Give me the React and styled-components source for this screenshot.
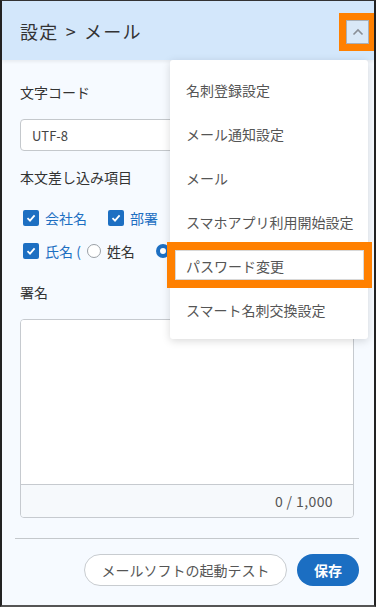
import styled, { createGlobalStyle } from "styled-components";

const GlobalStyle = createGlobalStyle`
  body {
    margin: 0;
    background: #ffffff;
    font-family: "Noto Sans CJK JP", "Noto Sans", sans-serif;
  }
`;

const menuItems = [
  "名刺登録設定",
  "メール通知設定",
  "メール",
  "スマホアプリ利用開始設定",
  "パスワード変更",
  "スマート名刺交換設定",
];

const CheckIcon = () => (
  <svg width="12" height="12" viewBox="0 0 12 12">
    <path d="M2.5 6.2 L5 8.6 L9.6 3.4" fill="none" stroke="#fff" strokeWidth="1.8" />
  </svg>
);

const App = () => {
  return (
    <>
      <GlobalStyle />
      <Frame>
        <Header>
          <Title>設定 &gt; メール</Title>
          <ToggleMark>
            <ToggleBtn>
              <svg width="12" height="8" viewBox="0 0 12 8">
                <path d="M1.5 6.5 L6 2 L10.5 6.5" fill="none" stroke="#8a8f96" strokeWidth="1.6" />
              </svg>
            </ToggleBtn>
          </ToggleMark>
        </Header>

        <Body>
          <Label>文字コード</Label>
          <Select>UTF-8</Select>
          <Label $top={16}>本文差し込み項目</Label>

          <CheckRow $top={21} $gap={21}>
            <CheckItem>
              <CheckBox>
                <CheckIcon />
              </CheckBox>
              <BlueText>会社名</BlueText>
            </CheckItem>
            <CheckItem>
              <CheckBox>
                <CheckIcon />
              </CheckBox>
              <BlueText>部署</BlueText>
            </CheckItem>
          </CheckRow>

          <CheckRow $top={13} $gap={6}>
            <CheckItem>
              <CheckBox>
                <CheckIcon />
              </CheckBox>
              <BlueText>氏名 (</BlueText>
            </CheckItem>
            <RadioItem>
              <Radio />
              <span>姓名</span>
            </RadioItem>
            <RadioItem $left={15}>
              <Radio $on />
            </RadioItem>
          </CheckRow>

          <Label $top={21}>署名</Label>
          <TextBox>
            <TextArea />
            <Counter>0 / 1,000</Counter>
          </TextBox>
        </Body>

        <Divider />
        <Actions>
          <OutlineBtn>メールソフトの起動テスト</OutlineBtn>
          <PrimaryBtn>保存</PrimaryBtn>
        </Actions>

        <Menu>
          {menuItems.map((item, i) => (
            <MenuItem key={item} $marked={i === 4}>
              {item}
            </MenuItem>
          ))}
        </Menu>
      </Frame>
    </>
  );
};

export default App;

const Frame = styled.div`
  position: relative;
  box-sizing: border-box;
  width: 376px;
  height: 607px;
  border-top: 1px solid #333;
  border-left: 2px solid #222;
  border-right: 2px solid #222;
  border-bottom: 2px solid #555;
  background: #f6faff;
  overflow: hidden;
`;

const Header = styled.div`
  display: flex;
  align-items: center;
  justify-content: space-between;
  height: 59px;
  padding: 0 0 0 18px;
  background: #d3e7fb;
  box-shadow: 0 2px 3px rgba(0, 0, 0, 0.06);
`;

const Title = styled.h1`
  margin: 0;
  font-size: 18px;
  font-weight: 400;
  color: #333;
  letter-spacing: 1.2px;
  word-spacing: 2px;
`;

const ToggleMark = styled.div`
  box-sizing: border-box;
  width: 36px;
  height: 38px;
  margin-top: 2px;
  border: 7px solid #ff8000;
  border-right-width: 6px;
  margin-right: -1px;
`;

const ToggleBtn = styled.div`
  box-sizing: border-box;
  display: flex;
  align-items: center;
  justify-content: center;
  width: 100%;
  height: 100%;
  background: #d9e8f7;
  border: 1px solid #a9b0b8;
`;

const Body = styled.div`
  padding: 22px 20px 0 18px;
`;

const Label = styled.div`
  margin-top: ${(p) => p.$top || 0}px;
  font-size: 14px;
  line-height: 20px;
  color: #333;
`;

const Select = styled.div`
  box-sizing: border-box;
  display: flex;
  align-items: center;
  height: 32px;
  margin-top: 17px;
  padding: 0 11px;
  background: #fff;
  border: 1px solid #c4c8cc;
  border-radius: 4px;
  font-size: 13px;
  color: #444;
`;

const CheckRow = styled.div`
  display: flex;
  align-items: center;
  gap: ${(p) => p.$gap}px;
  height: 20px;
  margin-top: ${(p) => p.$top}px;
  padding-left: 3px;
`;

const CheckItem = styled.div`
  display: flex;
  align-items: center;
  gap: 6px;
`;

const CheckBox = styled.span`
  display: inline-flex;
  align-items: center;
  justify-content: center;
  width: 16px;
  height: 16px;
  border-radius: 2px;
  background: #1d6fc2;
`;

const BlueText = styled.span`
  font-size: 14px;
  color: #1d6fc2;
`;

const RadioItem = styled.div`
  display: flex;
  align-items: center;
  gap: 6px;
  margin-left: ${(p) => p.$left || 0}px;
  font-size: 14px;
  color: #333;
`;

const Radio = styled.span`
  box-sizing: border-box;
  flex: none;
  width: 14px;
  height: 14px;
  border-radius: 50%;
  background: #fff;
  border: ${(p) => (p.$on ? "4px solid #1d6fc2" : "1px solid #9aa0a6")};
`;

const TextBox = styled.div`
  display: flex;
  flex-direction: column;
  margin-top: 17px;
  border: 1px solid #c6cacf;
  border-radius: 4px;
  overflow: hidden;
`;

const TextArea = styled.div`
  height: 164px;
  background: #fff;
  border-bottom: 1px solid #c6cacf;
`;

const Counter = styled.div`
  height: 32px;
  padding-right: 20px;
  text-align: right;
  line-height: 32px;
  font-size: 14px;
  color: #555;
  background: #f6f9fc;
  letter-spacing: 0.4px;
`;

const Divider = styled.div`
  height: 1px;
  margin: 20px 15px 0 13px;
  background: #c4c8cc;
`;

const Actions = styled.div`
  display: flex;
  justify-content: flex-end;
  gap: 10px;
  margin-top: 15px;
  padding-right: 15px;
`;

const OutlineBtn = styled.button`
  box-sizing: border-box;
  width: 203px;
  height: 32px;
  border: 1px solid #c8ccd0;
  border-radius: 16px;
  background: #fff;
  font-family: inherit;
  font-size: 14px;
  color: #555;
`;

const PrimaryBtn = styled.button`
  box-sizing: border-box;
  width: 62px;
  height: 32px;
  border: none;
  border-radius: 16px;
  background: #1b6ec2;
  font-family: inherit;
  font-size: 14px;
  font-weight: 700;
  color: #fff;
`;

const Menu = styled.ul`
  position: absolute;
  top: 59px;
  left: 168px;
  width: 198px;
  margin: 0;
  padding: 8px 0 7px;
  list-style: none;
  background: #fff;
  border-radius: 3px;
  box-shadow: 0 2px 8px rgba(0, 0, 0, 0.15);
`;

const MenuItem = styled.li`
  position: relative;
  height: 44px;
  padding-left: 16px;
  line-height: 44px;
  font-size: 14px;
  color: #555;

  ${(p) =>
    p.$marked &&
    `
    &::after {
      content: "";
      position: absolute;
      left: -3px;
      right: -4px;
      top: -2px;
      bottom: 0;
      border: 8px solid #ff8000;
      box-shadow: inset 0 0 0 1px #d8d8d8;
    }
  `}
`;
